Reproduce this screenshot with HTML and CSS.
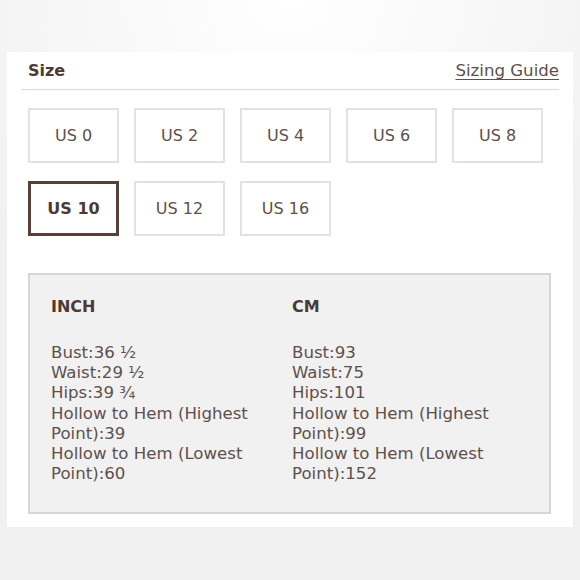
FILE: index.html
```html
<!DOCTYPE html>
<html>
<head>
<meta charset="utf-8">
<link rel="stylesheet" href="styles.css">
</head>
<body>
<div class="card">
  <div class="header">
    <span class="title">Size</span>
    <a class="guide" href="#">Sizing Guide</a>
  </div>
  <div class="sizes">
    <div class="size">US 0</div>
    <div class="size">US 2</div>
    <div class="size">US 4</div>
    <div class="size">US 6</div>
    <div class="size">US 8</div>
    <div class="size selected">US 10</div>
    <div class="size">US 12</div>
    <div class="size">US 16</div>
  </div>
  <div class="chart">
    <div class="col">
      <div class="unit">INCH</div>
      <div class="vals">Bust:36 ½<br>Waist:29 ½<br>Hips:39 ¾<br>Hollow to Hem (Highest Point):39<br>Hollow to Hem (Lowest Point):60</div>
    </div>
    <div class="col">
      <div class="unit">CM</div>
      <div class="vals">Bust:93<br>Waist:75<br>Hips:101<br>Hollow to Hem (Highest Point):99<br>Hollow to Hem (Lowest Point):152</div>
    </div>
  </div>
</div>
</body>
</html>
```
FILE: styles.css
```css
html, body {
  margin: 0;
  height: 100%;
}
body {
  background: radial-gradient(ellipse 70% 60% at 50% 0%, #ffffff 0%, #f7f6f6 60%, #f1f0f0 100%);
  font-family: "DejaVu Sans", "Open Sans", sans-serif;
  color: #5d504c;
  padding-top: 52px;
  box-sizing: border-box;
}
.card {
  background: #ffffff;
  margin: 0 7px;
  height: 475px;
  padding: 0 14px;
  box-sizing: border-box;
}
.header {
  display: flex;
  justify-content: space-between;
  align-items: center;
  height: 37px;
  padding-left: 7px;
  border-bottom: 1px solid #dedada;
}
.title {
  font-weight: bold;
  font-size: 16px;
  color: #4b3a35;
}
.guide {
  font-size: 16.6px;
  color: #5d504c;
  text-decoration: underline;
  text-underline-offset: 3px;
  text-decoration-thickness: 1px;
}
.sizes {
  display: grid;
  grid-template-columns: repeat(5, 91px);
  column-gap: 15px;
  row-gap: 18px;
  padding: 18px 0 0 7px;
}
.size {
  height: 55px;
  box-sizing: border-box;
  border: 2px solid #e3e1e1;
  display: flex;
  align-items: center;
  justify-content: center;
  font-size: 16px;
  color: #5d504c;
}
.size.selected {
  border: 3px solid #5a3f38;
  font-weight: bold;
  color: #4b3a35;
}
.chart {
  margin: 37px 0 0 7px;
  width: 523px;
  height: 241px;
  box-sizing: border-box;
  border: 2px solid #d7d6d6;
  background: #f1f1f1;
  padding: 22px 21px 0;
  display: grid;
  grid-template-columns: 241px 236px;
}
.unit {
  font-size: 16px;
  font-weight: 600;
  line-height: 20px;
  color: #4b3a35;
  margin-bottom: 26px;
}
.vals {
  font-size: 16.6px;
  line-height: 20.2px;
  width: 230px;
}
```
